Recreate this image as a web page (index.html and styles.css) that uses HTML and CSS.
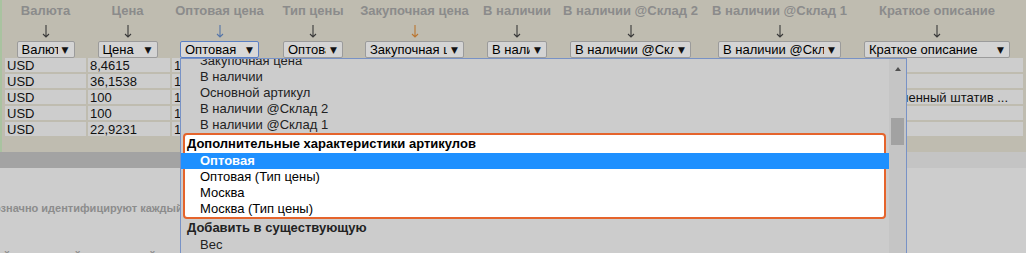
FILE: index.html
```html
<!DOCTYPE html>
<html lang="ru">
<head>
    <meta charset="UTF-8">
    <title>Импорт артикулов - сопоставление колонок</title>
    <link rel="stylesheet" href="styles.css">
</head>
<body>
    <div class="page">
        <!-- column mapping header -->
        <div class="mapping">
            <div class="map-col c1">
                <div class="map-name">Валюта</div>
                <div class="map-arrow"><svg width="8" height="13" viewBox="0 0 8 13"><path d="M4 0V12M1 9L4 12L7 9"/></svg></div>
                <div class="sel w58"><span class="sel-text">Валюта</span><span class="sel-arrow">▼</span></div>
            </div>
            <div class="map-col c2">
                <div class="map-name">Цена</div>
                <div class="map-arrow"><svg width="8" height="13" viewBox="0 0 8 13"><path d="M4 0V12M1 9L4 12L7 9"/></svg></div>
                <div class="sel w60"><span class="sel-text">Цена</span><span class="sel-arrow">▼</span></div>
            </div>
            <div class="map-col c3">
                <div class="map-name">Оптовая цена</div>
                <div class="map-arrow blue"><svg width="8" height="13" viewBox="0 0 8 13"><path d="M4 0V12M1 9L4 12L7 9"/></svg></div>
                <div class="sel w79 focused"><span class="sel-text">Оптовая</span><span class="sel-arrow">▼</span></div>
            </div>
            <div class="map-col c4">
                <div class="map-name">Тип цены</div>
                <div class="map-arrow"><svg width="8" height="13" viewBox="0 0 8 13"><path d="M4 0V12M1 9L4 12L7 9"/></svg></div>
                <div class="sel w60"><span class="sel-text">Оптовая</span><span class="sel-arrow">▼</span></div>
            </div>
            <div class="map-col c5">
                <div class="map-name">Закупочная цена</div>
                <div class="map-arrow orange"><svg width="8" height="13" viewBox="0 0 8 13"><path d="M4 0V12M1 9L4 12L7 9"/></svg></div>
                <div class="sel w99"><span class="sel-text">Закупочная цена</span><span class="sel-arrow">▼</span></div>
            </div>
            <div class="map-col c6">
                <div class="map-name">В наличии</div>
                <div class="map-arrow"><svg width="8" height="13" viewBox="0 0 8 13"><path d="M4 0V12M1 9L4 12L7 9"/></svg></div>
                <div class="sel w60"><span class="sel-text">В наличии</span><span class="sel-arrow">▼</span></div>
            </div>
            <div class="map-col c7">
                <div class="map-name">В наличии @Склад 2</div>
                <div class="map-arrow"><svg width="8" height="13" viewBox="0 0 8 13"><path d="M4 0V12M1 9L4 12L7 9"/></svg></div>
                <div class="sel w121"><span class="sel-text">В наличии @Склад 2</span><span class="sel-arrow">▼</span></div>
            </div>
            <div class="map-col c8">
                <div class="map-name">В наличии @Склад 1</div>
                <div class="map-arrow"><svg width="8" height="13" viewBox="0 0 8 13"><path d="M4 0V12M1 9L4 12L7 9"/></svg></div>
                <div class="sel w123"><span class="sel-text">В наличии @Склад 1</span><span class="sel-arrow">▼</span></div>
            </div>
            <div class="map-col c9">
                <div class="map-name">Краткое описание</div>
                <div class="map-arrow"><svg width="8" height="13" viewBox="0 0 8 13"><path d="M4 0V12M1 9L4 12L7 9"/></svg></div>
                <div class="sel w146"><span class="sel-text">Краткое описание</span><span class="sel-arrow">▼</span></div>
            </div>
        </div>

        <!-- preview rows -->
        <div class="grid">
            <div class="row">
                <div class="cell d1">USD</div><div class="cell d2">8,4615</div><div class="cell d3">1</div><div class="cell d4"></div><div class="cell desc"></div>
            </div>
            <div class="row">
                <div class="cell d1">USD</div><div class="cell d2">36,1538</div><div class="cell d3">1</div><div class="cell d4"></div><div class="cell desc"></div>
            </div>
            <div class="row">
                <div class="cell d1">USD</div><div class="cell d2">100</div><div class="cell d3">1</div><div class="cell d4"></div><div class="cell desc">Складной усиленный штатив ...</div>
            </div>
            <div class="row">
                <div class="cell d1">USD</div><div class="cell d2">100</div><div class="cell d3">1</div><div class="cell d4"></div><div class="cell desc"></div>
            </div>
            <div class="row">
                <div class="cell d1">USD</div><div class="cell d2">22,9231</div><div class="cell d3">1</div><div class="cell d4"></div><div class="cell desc"></div>
            </div>
        </div>
        <div class="hscroll"><div class="hthumb"></div></div>

        <div class="notes">
            <p>означно идентифицируют каждый артикул</p>
            <p>ый уникальный код, который используется для поиска</p>
        </div>

        <!-- open select list -->
        <div class="menu">
            <div class="menu-list">
                <div class="opt">Закупочная цена</div>
                <div class="opt">В наличии</div>
                <div class="opt">Основной артикул</div>
                <div class="opt">В наличии @Склад 2</div>
                <div class="opt">В наличии @Склад 1</div>
                <div class="hl">
                    <div class="group-label">Дополнительные характеристики артикулов</div>
                    <div class="opt selected">Оптовая</div>
                    <div class="opt">Оптовая (Тип цены)</div>
                    <div class="opt">Москва</div>
                    <div class="opt">Москва (Тип цены)</div>
                </div>
                <div class="group-label">Добавить в существующую</div>
                <div class="opt">Вес</div>
            </div>
            <div class="menu-scroll">
                <div class="scroll-up"></div>
                <div class="scroll-thumb"></div>
            </div>
        </div>
    </div>
</body>
</html>
```

FILE: styles.css
```css
body {
    margin: 0;
    font-family: "Liberation Sans", Arial, sans-serif;
    font-size: 13px;
    background-color: #cdcdcd;
}
.page {
    position: relative;
    width: 1026px;
    height: 253px;
    overflow: hidden;
}
.mapping {
    display: flex;
    height: 58px;
    background-color: #bfbcb0;
    border-left: 2px solid #a9c3a0;
}
.map-col {
    display: flex;
    flex-direction: column;
    align-items: center;
}
.c1 { width: 87px; }
.c2 { width: 77px; }
.c3 { width: 107px; }
.c4 { width: 80px; }
.c5 { width: 123px; }
.c6 { width: 82px; }
.c7 { width: 145px; }
.c8 { width: 153px; }
.c9 { width: 162px; }
.map-name {
    height: 19px;
    line-height: 19px;
    padding-top: 1px;
    font-weight: bold;
    color: #8b8b8b;
    white-space: nowrap;
}
.map-arrow {
    display: flex;
    justify-content: center;
    height: 16px;
    padding-top: 5px;
    stroke: #3a3a3a;
}
.map-arrow svg {
    fill: none;
    stroke-width: 1.1;
}
.map-arrow.blue {
    stroke: #5575a8;
}
.map-arrow.orange {
    stroke: #bb7630;
}
.sel {
    display: flex;
    align-items: center;
    height: 17px;
    box-sizing: border-box;
    border: 1px solid #9b9b9b;
    border-radius: 2px;
    background-color: #d4d4d4;
    padding: 0 5px 0 4px;
    color: #000;
}
.sel.focused {
    border-color: #5b80c4;
    background-color: #d8d8d8;
}
.w58 { width: 58px; }
.w60 { width: 60px; }
.w79 { width: 79px; }
.w99 { width: 99px; }
.w121 { width: 121px; }
.w123 { width: 123px; }
.w146 { width: 146px; }
.sel-text {
    flex: 1;
    overflow: hidden;
    white-space: nowrap;
    text-overflow: clip;
}
.sel-arrow {
    font-family: "DejaVu Sans", sans-serif;
    font-size: 9px;
    margin-left: 4px;
    color: #111;
}
.grid {
    display: flex;
    flex-direction: column;
    gap: 2px;
    padding: 0 3px 16px 3px;
    background-color: #bfbcb0;
    border-left: 2px solid #a9c3a0;
}
.row {
    display: flex;
    gap: 2px;
    height: 14px;
    line-height: 15px;
}
.cell {
    background-color: #cdcdcd;
    padding-left: 2px;
    color: #111;
    overflow: hidden;
    white-space: nowrap;
    box-sizing: border-box;
}
.d1 { width: 81px; }
.d2 { width: 82px; }
.d3 { width: 88px; }
.d4 { width: 520px; }
.desc {
    flex: 1;
    text-align: right;
    padding-right: 15px;
}
.hscroll {
    height: 16px;
    background-color: #c4c4c4;
}
.hthumb {
    width: 600px;
    height: 100%;
    background-color: #a3a3a3;
}
.notes {
    padding-top: 32px;
    color: #8c8c8c;
    font-size: 11px;
    font-weight: bold;
}
.notes p {
    margin: 0 0 31px -6px;
    line-height: 16px;
    white-space: nowrap;
}
.menu {
    position: absolute;
    left: 180px;
    top: 58px;
    width: 727px;
    height: 200px;
    box-sizing: border-box;
    border: 1px solid #7892c6;
    background-color: #cccccc;
    display: flex;
    overflow: hidden;
}
.menu-list {
    flex: 1;
    margin-top: -6px;
}
.opt {
    height: 16px;
    line-height: 16px;
    padding-left: 19px;
    color: #222;
    white-space: nowrap;
}
.group-label {
    height: 18px;
    line-height: 18px;
    padding-left: 6px;
    font-weight: bold;
    color: #222;
    white-space: nowrap;
}
.hl {
    margin: 0 3px 0 2px;
    border: 2px solid #e5642c;
    border-radius: 4px;
    background-color: #fff;
}
.hl .group-label {
    padding-left: 2px;
    color: #000;
}
.hl .opt {
    padding-left: 15px;
    color: #000;
}
.hl .opt.selected {
    margin: 0 -5px 0 -4px;
    padding-left: 19px;
    background-color: #1e90ff;
    color: #fff;
    font-weight: bold;
}
.menu-scroll {
    width: 17px;
    display: flex;
    flex-direction: column;
    align-items: center;
    background-color: #c5c5c5;
}
.scroll-up {
    width: 0;
    height: 0;
    margin-top: 8px;
    border-left: 3px solid transparent;
    border-right: 3px solid transparent;
    border-bottom: 4px solid #505050;
}
.scroll-thumb {
    width: 13px;
    height: 27px;
    margin-top: 47px;
    background-color: #a2a2a2;
}
```
